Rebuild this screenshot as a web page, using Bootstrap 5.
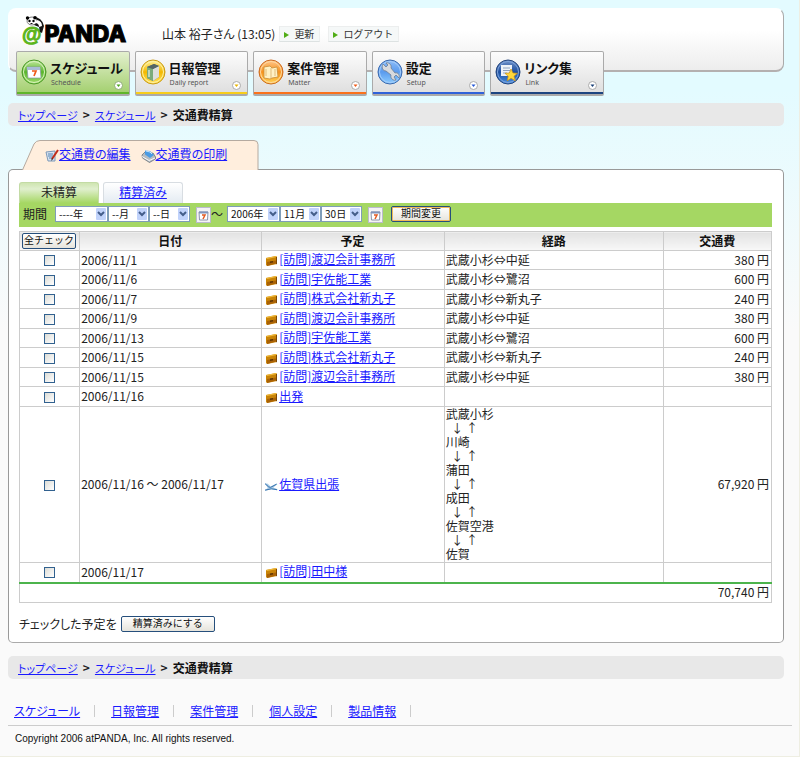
<!DOCTYPE html>
<html lang="ja">
<head>
<meta charset="utf-8">
<meta name="viewport" content="width=device-width, initial-scale=1">
<title>交通費精算 - @PANDA</title>
<link href="https://cdn.jsdelivr.net/npm/bootstrap@5.3.0/dist/css/bootstrap.min.css" rel="stylesheet">
<style>
body{font-family:"Noto Sans CJK JP",sans-serif;font-size:12px;line-height:16px;color:#222;font-feature-settings:"palt";
  background:linear-gradient(#e3fbff 0,#e3fbff 90px,#fafafa 330px) no-repeat #fafafa;border-right:1px solid #eeeee2}
a{color:#1a1aff}
.page-wrap{padding:8px 15px 0 8px}
.masthead{height:64px;border:1px solid #fff;border-right-color:#aaa;border-bottom:2px solid #b4b0b0;border-radius:8px;background:linear-gradient(#fff 35%,#ededed)}
.brand-mark{position:relative;color:#000;font:800 23px/24px Inter,sans-serif;margin:13px 0 0 12px;width:141px;white-space:nowrap;-webkit-text-stroke:1px currentColor}
.brand-mark .at-sign{color:#5cb51c;font:700 20px/20px "Liberation Sans",sans-serif;margin:0 3px 0 1px;vertical-align:1px;-webkit-text-stroke:1px currentColor}
.brand-mark svg{position:absolute;left:3px;top:-6px}
.mini-btn{font-size:10px;line-height:14px;padding:0 5px 0 4px;border:1px solid #eceeee;border-radius:0;background:#f5f8f8;color:#333;border-bottom-color:#dde2e2;white-space:nowrap}
.mini-btn::before{content:"";display:inline-block;border:3px solid transparent;border-left:5px solid #50ad16;border-right:0;margin-right:5px}
.user-line{margin-top:15px;padding-top:2px;white-space:nowrap}
.main-nav{display:grid;grid-template-columns:repeat(5,1fr);gap:5px;max-width:588px;margin:-21px 0 0 8px;position:relative}
.main-nav a{height:45px;border:1px solid #aaa;border-bottom-width:2px;border-radius:2px;background:linear-gradient(#fcfcfc,#dedede);color:#111;text-decoration:none;box-shadow:inset 0 -2px 0 var(--tone);display:flex;padding:7px 4px 0;position:relative;white-space:nowrap}
.main-nav a>svg{flex:none}
.main-nav a.active{background:linear-gradient(#e4f0cf,#a2cf6d)}
.main-nav b{display:block;font-size:13px;line-height:20px;margin-top:-1px}
.main-nav small{display:block;font:7px/10px "Noto Sans",sans-serif;color:#555}
.main-nav .nav-words{padding-left:3px}
.main-nav .nav-words small{padding-left:1px}
.main-nav .drop-dot{position:absolute;right:6px;bottom:4px}
.crumbs{background:#e8e8e8;border-radius:5px;padding:4px 10px 3px;margin-top:7px}
.crumbs a{font-size:11px}
.crumbs span{margin:0 5px;font-weight:700}
.crumbs b{color:#111}
.crumbs.lower{margin-top:13px}
.tool-tab{position:relative;height:30px;width:236px;margin:14px 0 -1px 14px;z-index:1}
.tool-tab>svg{position:absolute;left:0;top:0}
.tool-tab .tool-links{position:relative;padding:6px 0 0 23px;gap:10px;white-space:nowrap}
.sheet{border:1px solid #999;border-bottom-color:#aaa;border-radius:5px;background:#fff;padding:12px 11px 10px 10px}
.sheet-tab{width:80px;height:21px;border:1px solid #d8dde2;border-bottom:0;border-radius:3px 3px 0 0;background:linear-gradient(#fff,#e4ebf2);text-align:center;line-height:18px;margin-right:4px}
.sheet-tab.active{background:linear-gradient(#cfe5b1,#e0efce 30%,#a5d763);border-color:#c3dba5;color:#222;text-decoration:none}
.period{background:#a5d763;height:24px;padding:0 4px 2px;margin-bottom:4px}
.period select{appearance:none;height:16px;border:1px solid #7f9db9;border-radius:0;padding:0 0 0 3px;font-size:10px;line-height:14px;color:#111;width:41px;
  background:#fff url("data:image/svg+xml,%3Csvg xmlns='http://www.w3.org/2000/svg' width='11' height='14'%3E%3Crect y='1' width='10' height='12' rx='1' fill='%23c1d3fb'/%3E%3Cpath d='M2 5l3 3 3-3' fill='none' stroke='%23445d8a' stroke-width='2'/%3E%3C/svg%3E") right center no-repeat}
.period select.year{width:53px}
.cal-btn{width:15px;height:16px;padding:0;border:1px solid #bbc;background:#f4f3f5;display:flex;align-items:center;justify-content:center;flex:none;margin:2px 0 0 6px}
.xp-btn{font-size:10px;line-height:12px;height:16px;padding:0 4px 2px;border:1px solid #264f7c;border-radius:2px;background:linear-gradient(#fff,#e6e4dc);color:#111;white-space:nowrap}
.xp-btn.check-all{padding:0 1px 2px}
.xp-btn.focal{box-shadow:inset 0 0 0 1px #efba58;padding:0 9px 2px}
.xp-btn.settle{padding:0 11px 2px}
.settle-line{margin-top:13px}
.expense{table-layout:fixed;width:100%;border-collapse:collapse}
.expense th,.expense td{border:1px solid #ccc;padding:0 2px 1px 1px;height:19px;line-height:14px;vertical-align:middle}
.expense tbody tr:nth-child(even) td{height:20px}
.expense th{text-align:center;height:19px;background:linear-gradient(#e2e2e2,#f8f8f8);color:#111}
.expense td:first-child,.expense th:first-child{text-align:center}
.expense td:last-child{text-align:right}
.expense td:nth-child(3) svg{margin:0 1px 0 2px;vertical-align:-3px}
.expense tfoot{border-top:2px solid #4cb44c}
.expense tfoot td{border-top:2px solid #4cb44c;height:20px}
.expense input{appearance:none;width:11px;height:11px;border:1px solid #31618f;background:linear-gradient(135deg,#dcdcd6,#fff);display:block;margin:2px auto 0}
.page-foot{margin-top:22px}
.foot-links{margin-bottom:8px;padding:4px 0 0 6px}
.foot-links li{padding-right:14px;margin-right:16px;border-right:1px solid #ccc;line-height:12px}
.legal{border-top:1px solid #ccc;margin-right:-8px;padding:6px 7px 0;font:10px/14px "Liberation Sans",sans-serif;color:#111}
.page-end{border-bottom:1px solid #eeeee2;height:11px}
</style>
<script src="https://cdn.jsdelivr.net/npm/bootstrap@5.3.0/dist/js/bootstrap.bundle.min.js"></script>
</head>
<body>
<svg width="0" height="0" class="position-absolute" aria-hidden="true">
  <defs>
    <linearGradient id="gold" x2="0" y2="1"><stop stop-color="#fff4a0"/><stop offset=".5" stop-color="#f4b800"/><stop offset="1" stop-color="#ffe35c"/></linearGradient>
    <linearGradient id="orange" x2="0" y2="1"><stop stop-color="#ffc890"/><stop offset=".5" stop-color="#f7921c"/><stop offset="1" stop-color="#ffd757"/></linearGradient>
    <linearGradient id="green" x2="0" y2="1"><stop stop-color="#c5eaa2"/><stop offset=".5" stop-color="#59b52c"/><stop offset="1" stop-color="#a2dd6d"/></linearGradient>
    <linearGradient id="blue" x2="0" y2="1"><stop stop-color="#8dbcf8"/><stop offset=".5" stop-color="#5b9bee"/><stop offset="1" stop-color="#8ccdff"/></linearGradient>
    <linearGradient id="navy" x2="0" y2="1"><stop stop-color="#7293c9"/><stop offset=".5" stop-color="#1d4fa0"/><stop offset="1" stop-color="#4a90e2"/></linearGradient>
    <symbol id="case" viewBox="0 0 13 12"><path d="M1 3l10-2 1 1v7l-10 2-1-1z" fill="#c98407"/><path d="M1 3l10-2 1 1-10 2z" fill="#f0b93a"/><path d="M11 2h1v7l-1 .3z" fill="#7d4704"/><path d="M2 7l9-1.500v3L2 11z" fill="#a96206"/><path d="M5 6.500l3-.5v1.500l-3 .5z" fill="#5c3404"/></symbol>
    <symbol id="plane" viewBox="0 0 14 12"><path d="M0 3l3 .5 3 3 6-3 1.500.3L9 7.500l4.500 2-.5 1L6 9.500l-5 1.500-1-.8 3-2z" fill="#a9cbe6"/><path d="M0 3.500l4 3.500 2 .5L12.500 4M0 10.500l7-1.500 6 1" stroke="#2c6aa8" fill="none"/></symbol>
    <symbol id="cal" viewBox="0 0 11 11"><path d="M1 2h9l-.5 8h-8z" fill="#fff" stroke="#8c96ac"/><path d="M1 1.500h9v2H1z" fill="#8294bb"/><path d="M4 5h3L5 9" fill="none" stroke="#e35a21" stroke-width="1.500"/></symbol>
  </defs>
</svg>
<div class="page-wrap">
  <header>
    <div class="masthead d-flex align-items-start">
      <div class="brand-mark"><span class="at-sign">@</span>PANDA
        <svg width="22" height="18" viewBox="0 0 22 18" aria-hidden="true"><path d="M3 4Q4 1 9 1q9 0 11 9l-2 7-2-1-1-5-5-2-5-1z" fill="#151515"/><ellipse cx="8" cy="5" rx="5" ry="4" fill="#fff" stroke="#333" stroke-width=".6"/><circle cx="3.500" cy="2" r="1.700"/><circle cx="11" cy="1.800" r="1.800"/><circle cx="5.500" cy="5" r="1.200"/><circle cx="9.500" cy="5" r="1.200"/><path d="M6.500 7.500h2" stroke="#111"/><path d="M13 4q5 1 5 6l-3 1q0-4-4-4z" fill="#fff"/></svg>
      </div>
      <div class="user-line d-flex align-items-center">
        <span class="me-1">山本 裕子さん (13:05)</span>
        <button type="button" class="mini-btn me-2">更新</button>
        <button type="button" class="mini-btn">ログアウト</button>
      </div>
    </div>
    <nav class="main-nav" aria-label="メイン">
      <a href="#" class="active" style="--tone:#5fb52a"><svg width="26" height="26" viewBox="0 0 26 26"><circle cx="13" cy="13" r="12" fill="url(#green)" stroke="#4c9a2a"/><circle cx="13" cy="13" r="10.500" fill="none" stroke="#d9f3bf"/><path d="M6 8h13l1 11H7z" fill="#fff" stroke="#8898a8" stroke-width=".7"/><path d="M6 8h13v3H6z" fill="#a9bcd6"/><path d="M11 12h4l-2 5" fill="none" stroke="#ee5a1a" stroke-width="1.700"/></svg><span class="nav-words"><b>スケジュール</b><small>Schedule</small></span><svg class="drop-dot" width="9" height="9"><circle cx="4.500" cy="4.500" r="4" fill="#fff" stroke="#8caa72"/><path d="M2.500 3.500h4l-2 2.500z" fill="#4aa51b"/></svg></a>
      <a href="#" style="--tone:#f7cd1b"><svg width="26" height="26" viewBox="0 0 26 26"><circle cx="13" cy="13" r="12" fill="url(#gold)" stroke="#c99b19"/><circle cx="13" cy="13" r="10.500" fill="none" stroke="#fff3a5"/><path d="M7 8l7-3 5 2v11l-6 4-6-3z" fill="#657568"/><path d="M7 8l6 2v12l-6-3z" fill="#7aab7a"/><path d="M13 10l6-3v11l-6 4z" fill="#dedfdc"/><path d="M7 8l7-3 5 2-6 3z" fill="#566"/><path d="M9 11v7" stroke="#fff"/></svg><span class="nav-words"><b>日報管理</b><small>Daily report</small></span><svg class="drop-dot" width="9" height="9"><circle cx="4.500" cy="4.500" r="4" fill="#fff" stroke="#aaa"/><path d="M2.500 3.500h4l-2 2.500z" fill="#e8b400"/></svg></a>
      <a href="#" style="--tone:#fa721c"><svg width="26" height="26" viewBox="0 0 26 26"><circle cx="13" cy="13" r="12" fill="url(#orange)" stroke="#cc6b22"/><circle cx="13" cy="13" r="10.500" fill="none" stroke="#ffd9a2"/><path d="M6 8l6-1 2 2 5-1 1 10-6 1-2 1-6-1z" fill="#fff1c4" stroke="#c88b36" stroke-width=".8"/><path d="M13 9v10M8 10v7M17 10v7" stroke="#e1bd7c"/></svg><span class="nav-words"><b>案件管理</b><small>Matter</small></span><svg class="drop-dot" width="9" height="9"><circle cx="4.500" cy="4.500" r="4" fill="#fff" stroke="#aaa"/><path d="M2.500 3.500h4l-2 2.500z" fill="#f05a16"/></svg></a>
      <a href="#" style="--tone:#2f62d9"><svg width="26" height="26" viewBox="0 0 26 26"><circle cx="13" cy="13" r="12" fill="url(#blue)" stroke="#3b69ad"/><circle cx="13" cy="13" r="10.500" fill="none" stroke="#a5cdfa"/><path d="M6 5l3 3 2-2-2-2c3-1 6 2 5 5l4 5c3-1 5 2 4 5l-3-3-2 2 2 3c-3 1-6-2-5-5l-5-4c-3 0-5-3-3-7z" fill="#d8dade" stroke="#6f7f93" stroke-width=".8"/></svg><span class="nav-words"><b>設定</b><small>Setup</small></span><svg class="drop-dot" width="9" height="9"><circle cx="4.500" cy="4.500" r="4" fill="#fff" stroke="#aaa"/><path d="M2.500 3.500h4l-2 2.500z" fill="#2458d8"/></svg></a>
      <a href="#" style="--tone:#1d4580"><svg width="26" height="26" viewBox="0 0 26 26"><circle cx="13" cy="13" r="12" fill="url(#navy)" stroke="#24457c"/><circle cx="13" cy="13" r="10.500" fill="none" stroke="#7fa5dc"/><path d="M6 6h11v11H6z" fill="#edf2f8"/><path d="M8 9h7M8 11.500h7M8 14h4" stroke="#8ca2c0"/><path d="M16 10l2 4 4.500.3-3.500 3 1.300 4.500-4.300-2.500-3.800 2.500 1-4.500-3.200-3 4.300-.3z" fill="#ffd83a" stroke="#c98f13" stroke-width=".7"/></svg><span class="nav-words"><b>リンク集</b><small>Link</small></span><svg class="drop-dot" width="9" height="9"><circle cx="4.500" cy="4.500" r="4" fill="#fff" stroke="#aaa"/><path d="M2.500 3.500h4l-2 2.500z" fill="#183f77"/></svg></a>
    </nav>
  </header>

  <nav class="crumbs" aria-label="パンくず"><a href="#">トップページ</a><span>&gt;</span><a href="#">スケジュール</a><span>&gt;</span><b>交通費精算</b></nav>

  <main>
    <div class="tool-tab">
      <svg width="237" height="30" viewBox="0 0 237 30" aria-hidden="true"><path d="M.5 30L12 4Q14 .5 18 .5h214q4 0 4 4V30" fill="#ffeedd" stroke="#b5aaa0"/></svg>
      <div class="tool-links d-flex">
        <a href="#"><svg width="14" height="14" viewBox="0 0 14 14"><path d="M1 3l9-1v10H3z" fill="#d6e2f0" stroke="#7e99b8"/><path d="M3 5h5M3 7h5M4 9h4" stroke="#5584b4"/><path d="M13 1L7 10" stroke="#c22b18" stroke-width="2"/><path d="M7 9l-1 3 2-2z" fill="#222"/></svg>交通費の編集</a>
        <a href="#"><svg width="15" height="14" viewBox="0 0 15 14"><path d="M1 6l3-3 4 2 4-1 2.500 4v2l-6 3.500-7-4.500z" fill="#b5bcc2" stroke="#59646e" stroke-width=".7"/><path d="M4 1.500l5 .5 4 4-4 3-5-3.500z" fill="#4a9be3"/><path d="M5 2l4 1 2 2" fill="none" stroke="#c8e6ff"/><path d="M1 7.500l7 4 6-2.500" fill="none" stroke="#f8f8f8"/></svg>交通費の印刷</a>
      </div>
    </div>
    <section class="sheet">
      <div class="d-flex"><a href="#" class="sheet-tab active">未精算</a><a href="#" class="sheet-tab">精算済み</a></div>
      <form class="period d-flex align-items-center">
        <span class="me-2">期間</span>
        <select class="year" aria-label="開始年"><option>----年</option></select><select aria-label="開始月"><option>--月</option></select><select aria-label="開始日"><option>--日</option></select>
        <button type="button" class="cal-btn" aria-label="開始日を選ぶ"><svg width="11" height="11"><use href="#cal"/></svg></button>
        <span class="me-1">〜</span>
        <select class="year" aria-label="終了年"><option>2006年</option></select><select aria-label="終了月"><option>11月</option></select><select aria-label="終了日"><option>30日</option></select>
        <button type="button" class="cal-btn me-2" aria-label="終了日を選ぶ"><svg width="11" height="11"><use href="#cal"/></svg></button>
        <button type="button" class="xp-btn focal">期間変更</button>
      </form>
      <table class="expense">
        <colgroup><col style="width:8%"><col style="width:24.200%"><col style="width:24.300%"><col style="width:29.200%"><col></colgroup>
        <thead><tr><th><button type="button" class="xp-btn check-all d-block mx-auto">全チェック</button></th><th>日付</th><th>予定</th><th>経路</th><th>交通費</th></tr></thead>
        <tbody>
          <tr><td><input type="checkbox" aria-label="2006/11/1"></td><td>2006/11/1</td><td><svg width="13" height="12"><use href="#case"/></svg><a href="#">[訪問]渡辺会計事務所</a></td><td>武蔵小杉⇔中延</td><td>380 円</td></tr>
          <tr><td><input type="checkbox" aria-label="2006/11/6"></td><td>2006/11/6</td><td><svg width="13" height="12"><use href="#case"/></svg><a href="#">[訪問]宇佐能工業</a></td><td>武蔵小杉⇔鷺沼</td><td>600 円</td></tr>
          <tr><td><input type="checkbox" aria-label="2006/11/7"></td><td>2006/11/7</td><td><svg width="13" height="12"><use href="#case"/></svg><a href="#">[訪問]株式会社新丸子</a></td><td>武蔵小杉⇔新丸子</td><td>240 円</td></tr>
          <tr><td><input type="checkbox" aria-label="2006/11/9"></td><td>2006/11/9</td><td><svg width="13" height="12"><use href="#case"/></svg><a href="#">[訪問]渡辺会計事務所</a></td><td>武蔵小杉⇔中延</td><td>380 円</td></tr>
          <tr><td><input type="checkbox" aria-label="2006/11/13"></td><td>2006/11/13</td><td><svg width="13" height="12"><use href="#case"/></svg><a href="#">[訪問]宇佐能工業</a></td><td>武蔵小杉⇔鷺沼</td><td>600 円</td></tr>
          <tr><td><input type="checkbox" aria-label="2006/11/15 株式会社新丸子"></td><td>2006/11/15</td><td><svg width="13" height="12"><use href="#case"/></svg><a href="#">[訪問]株式会社新丸子</a></td><td>武蔵小杉⇔新丸子</td><td>240 円</td></tr>
          <tr><td><input type="checkbox" aria-label="2006/11/15 渡辺会計事務所"></td><td>2006/11/15</td><td><svg width="13" height="12"><use href="#case"/></svg><a href="#">[訪問]渡辺会計事務所</a></td><td>武蔵小杉⇔中延</td><td>380 円</td></tr>
          <tr><td><input type="checkbox" aria-label="2006/11/16"></td><td>2006/11/16</td><td><svg width="13" height="12"><use href="#case"/></svg><a href="#">出発</a></td><td></td><td></td></tr>
          <tr><td><input type="checkbox" aria-label="2006/11/16 〜 2006/11/17"></td><td>2006/11/16 〜 2006/11/17</td><td><svg width="13" height="12"><use href="#plane"/></svg><a href="#">佐賀県出張</a></td><td>武蔵小杉<br>&nbsp;&nbsp;↓ ↑<br>川崎<br>&nbsp;&nbsp;↓ ↑<br>蒲田<br>&nbsp;&nbsp;↓ ↑<br>成田<br>&nbsp;&nbsp;↓ ↑<br>佐賀空港<br>&nbsp;&nbsp;↓ ↑<br>佐賀</td><td>67,920 円</td></tr>
          <tr><td><input type="checkbox" aria-label="2006/11/17"></td><td>2006/11/17</td><td><svg width="13" height="12"><use href="#case"/></svg><a href="#">[訪問]田中様</a></td><td></td><td></td></tr>
        </tbody>
        <tfoot><tr><td colspan="5" class="text-end">70,740 円</td></tr></tfoot>
      </table>
      <div class="settle-line d-flex align-items-center"><span class="me-1">チェックした予定を</span><button type="button" class="xp-btn settle">精算済みにする</button></div>
    </section>
  </main>

  <nav class="crumbs lower" aria-label="パンくず（下）"><a href="#">トップページ</a><span>&gt;</span><a href="#">スケジュール</a><span>&gt;</span><b>交通費精算</b></nav>

  <footer class="page-foot">
    <ul class="foot-links list-unstyled d-flex"><li><a href="#">スケジュール</a></li><li><a href="#">日報管理</a></li><li><a href="#">案件管理</a></li><li><a href="#">個人設定</a></li><li><a href="#">製品情報</a></li></ul>
    <p class="legal mb-0">Copyright 2006 atPANDA, Inc. All rights reserved.</p>
  </footer>
</div>
<div class="page-end"></div>
</body>
</html>
